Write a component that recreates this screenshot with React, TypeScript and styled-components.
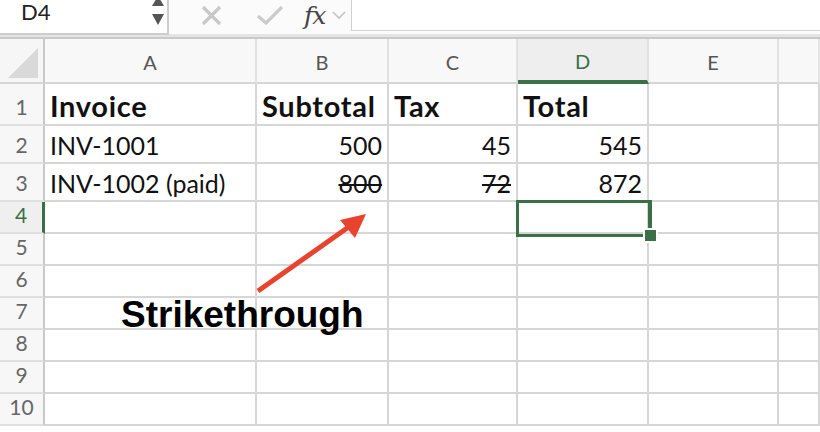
import React from 'react';
import styled, { createGlobalStyle, css } from 'styled-components';

const GREEN = '#3b6f47';
const LINE = '#d6d6d6';

const GlobalStyle = createGlobalStyle`
  html, body {
    margin: 0;
    padding: 0;
    background: #ffffff;
    overflow: hidden;
  }
  * {
    box-sizing: border-box;
  }
`;

const Page = styled.div`
  width: 820px;
  height: 432px;
  position: relative;
  overflow: hidden;
  background: #ffffff;
  font-family: Lato, 'Open Sans', sans-serif;
`;

const FormulaBar = styled.div`
  display: flex;
  align-items: flex-start;
  height: 39px;
  background: #fbfbfb;
  border-bottom: 2px solid #c9c9c9;
  box-shadow: 0 -3px 0 #e4e4e4 inset;
`;

const NameBox = styled.div`
  width: 169px;
  height: 35px;
  display: flex;
  align-items: flex-start;
  justify-content: space-between;
  padding: 0 3px 0 21px;
  background: #ffffff;
  border-right: 2px solid #cdcdcd;
  border-bottom: 2px solid #cdcdcd;
  color: #222;
  font-size: 22px;
  line-height: 24px;
`;

const Spinner = styled.div`
  display: flex;
  flex-direction: column;
  align-items: center;
  gap: 8px;
  margin-top: -4px;
`;

const Tri = styled.div<{ $down?: boolean }>`
  width: 0;
  height: 0;
  border-left: 6px solid transparent;
  border-right: 6px solid transparent;
  ${(p) =>
    p.$down
      ? css`border-top: 11px solid #555;`
      : css`border-bottom: 10px solid #555;`}
`;

const Tools = styled.div`
  display: flex;
  align-items: center;
  height: 30px;
  padding-left: 31px;
`;

const ToolIcon = styled.svg<{ $w: number }>`
  width: ${(p) => p.$w}px;
  height: 26px;
  flex: none;
`;

const Fx = styled.span`
  font-family: 'DejaVu Serif', 'Liberation Serif', serif;
  font-style: italic;
  font-size: 25px;
  color: #444;
  margin-left: 20px;
  letter-spacing: -1px;
`;

const FormulaInput = styled.div`
  flex: 1;
  height: 31px;
  margin-left: 4px;
  background: #ffffff;
  border-left: 1px solid #cfcfcf;
  border-bottom: 1px solid #d3d3d3;
`;

const Sheet = styled.div`
  display: grid;
  grid-template-columns: 45px 212px 132px 129px 131px 130px 1fr;
  grid-template-rows: 45px 42px 38px 38px repeat(7, 32px);
  position: relative;
`;

const Corner = styled.div`
  background: #f6f6f6;
  border-right: 2px solid #c9c9c9;
  border-bottom: 2px solid ${LINE};
  position: relative;
  &::after {
    content: '';
    position: absolute;
    right: 5px;
    bottom: 4px;
    width: 0;
    height: 0;
    border-left: 30px solid transparent;
    border-bottom: 30px solid #d9d9d9;
  }
`;

const ColHead = styled.div<{ $active?: boolean }>`
  display: flex;
  align-items: center;
  justify-content: center;
  padding-top: 2px;
  font-size: 20px;
  color: ${(p) => (p.$active ? GREEN : '#555')};
  background: ${(p) => (p.$active ? '#eeeeee' : '#f8f8f8')};
  border-right: 2px solid #e2e2e2;
  border-bottom: ${(p) => (p.$active ? `4px solid ${GREEN}` : `2px solid ${LINE}`)};
`;

const RowHead = styled.div<{ $active?: boolean }>`
  display: flex;
  align-items: flex-end;
  justify-content: center;
  padding-bottom: 5px;
  font-size: 21px;
  color: ${(p) => (p.$active ? GREEN : '#666')};
  background: ${(p) => (p.$active ? '#efefef' : '#f7f7f7')};
  border-right: ${(p) => (p.$active ? `3px solid ${GREEN}` : '2px solid #c9c9c9')};
  border-bottom: 2px solid #e0e0e0;
`;

const Cell = styled.div<{ $bold?: boolean; $right?: boolean; $strike?: boolean }>`
  display: flex;
  align-items: flex-end;
  justify-content: ${(p) => (p.$right ? 'flex-end' : 'flex-start')};
  padding: 0 5px ${(p) => (p.$bold ? 1 : 2)}px 5px;
  white-space: nowrap;
  color: #111;
  font-size: ${(p) => (p.$bold ? 29 : 25)}px;
  font-weight: ${(p) => (p.$bold ? 700 : 400)};
  letter-spacing: ${(p) => (p.$bold ? 0.7 : 0)}px;
  text-decoration: ${(p) => (p.$strike ? 'line-through' : 'none')};
  text-decoration-thickness: 2px;
  border-right: 2px solid ${LINE};
  border-bottom: 2px solid ${LINE};
`;

const Selection = styled.div`
  position: absolute;
  left: 516px;
  top: 200px;
  width: 136px;
  height: 37px;
  border: 3px solid ${GREEN};
  border-right-width: 4px;
  pointer-events: none;
`;

const Handle = styled.div`
  position: absolute;
  right: -8px;
  bottom: -7px;
  width: 11px;
  height: 11px;
  background: ${GREEN};
  outline: 2px solid #ffffff;
`;

const Arrow = styled.svg`
  position: absolute;
  left: 0;
  top: 0;
  width: 820px;
  height: 432px;
  pointer-events: none;
`;

const Note = styled.div`
  position: absolute;
  left: 121px;
  top: 294px;
  font-family: 'Liberation Sans', Arial, sans-serif;
  font-weight: 700;
  font-size: 37px;
  color: #000;
`;

type CellData = { text?: string; bold?: boolean; right?: boolean; strike?: boolean };

const COLS = ['A', 'B', 'C', 'D', 'E', ''];

const DATA: CellData[][] = [
  [{ text: 'Invoice', bold: true }, { text: 'Subtotal', bold: true }, { text: 'Tax', bold: true }, { text: 'Total', bold: true }],
  [{ text: 'INV-1001' }, { text: '500', right: true }, { text: '45', right: true }, { text: '545', right: true }],
  [{ text: 'INV-1002 (paid)' }, { text: '800', right: true, strike: true }, { text: '72', right: true, strike: true }, { text: '872', right: true }],
];

export default function App() {
  const rows = Array.from({ length: 10 }, (_, i) => i + 1);

  return (
    <Page>
      <GlobalStyle />
      <FormulaBar>
        <NameBox>
          <span>D4</span>
          <Spinner>
            <Tri />
            <Tri $down />
          </Spinner>
        </NameBox>
        <Tools>
          <ToolIcon $w={24} viewBox="0 0 24 26">
            <path d="M3 5 L20 22 M20 5 L3 22" stroke="#c8c8c8" strokeWidth="3.2" fill="none" />
          </ToolIcon>
          <ToolIcon $w={28} viewBox="0 0 28 26" style={{ marginLeft: 32 }}>
            <path d="M2 14 L10 21 L26 5" stroke="#cbcbcb" strokeWidth="3.2" fill="none" />
          </ToolIcon>
          <Fx>fx</Fx>
          <ToolIcon $w={16} viewBox="0 0 16 26" style={{ marginLeft: 6 }}>
            <path d="M2 10 L8 16 L14 10" stroke="#c4c4c4" strokeWidth="1.6" fill="none" />
          </ToolIcon>
        </Tools>
        <FormulaInput />
      </FormulaBar>

      <Sheet>
        <Corner />
        {COLS.map((c, i) => (
          <ColHead key={`h${i}`} $active={c === 'D'}>
            {c}
          </ColHead>
        ))}
        {rows.map((r) => (
          <React.Fragment key={r}>
            <RowHead $active={r === 4}>{r}</RowHead>
            {COLS.map((_, ci) => {
              const d = DATA[r - 1]?.[ci];
              return (
                <Cell key={ci} $bold={d?.bold} $right={d?.right} $strike={d?.strike}>
                  {d?.text}
                </Cell>
              );
            })}
          </React.Fragment>
        ))}
      </Sheet>

      <Selection>
        <Handle />
      </Selection>

      <Arrow viewBox="0 0 820 432">
        <line x1="258" y1="291" x2="350" y2="226" stroke="#e8432e" strokeWidth="5" />
        <polygon points="366,214 340,220 355,238" fill="#e8432e" />
      </Arrow>

      <Note>Strikethrough</Note>
    </Page>
  );
}
